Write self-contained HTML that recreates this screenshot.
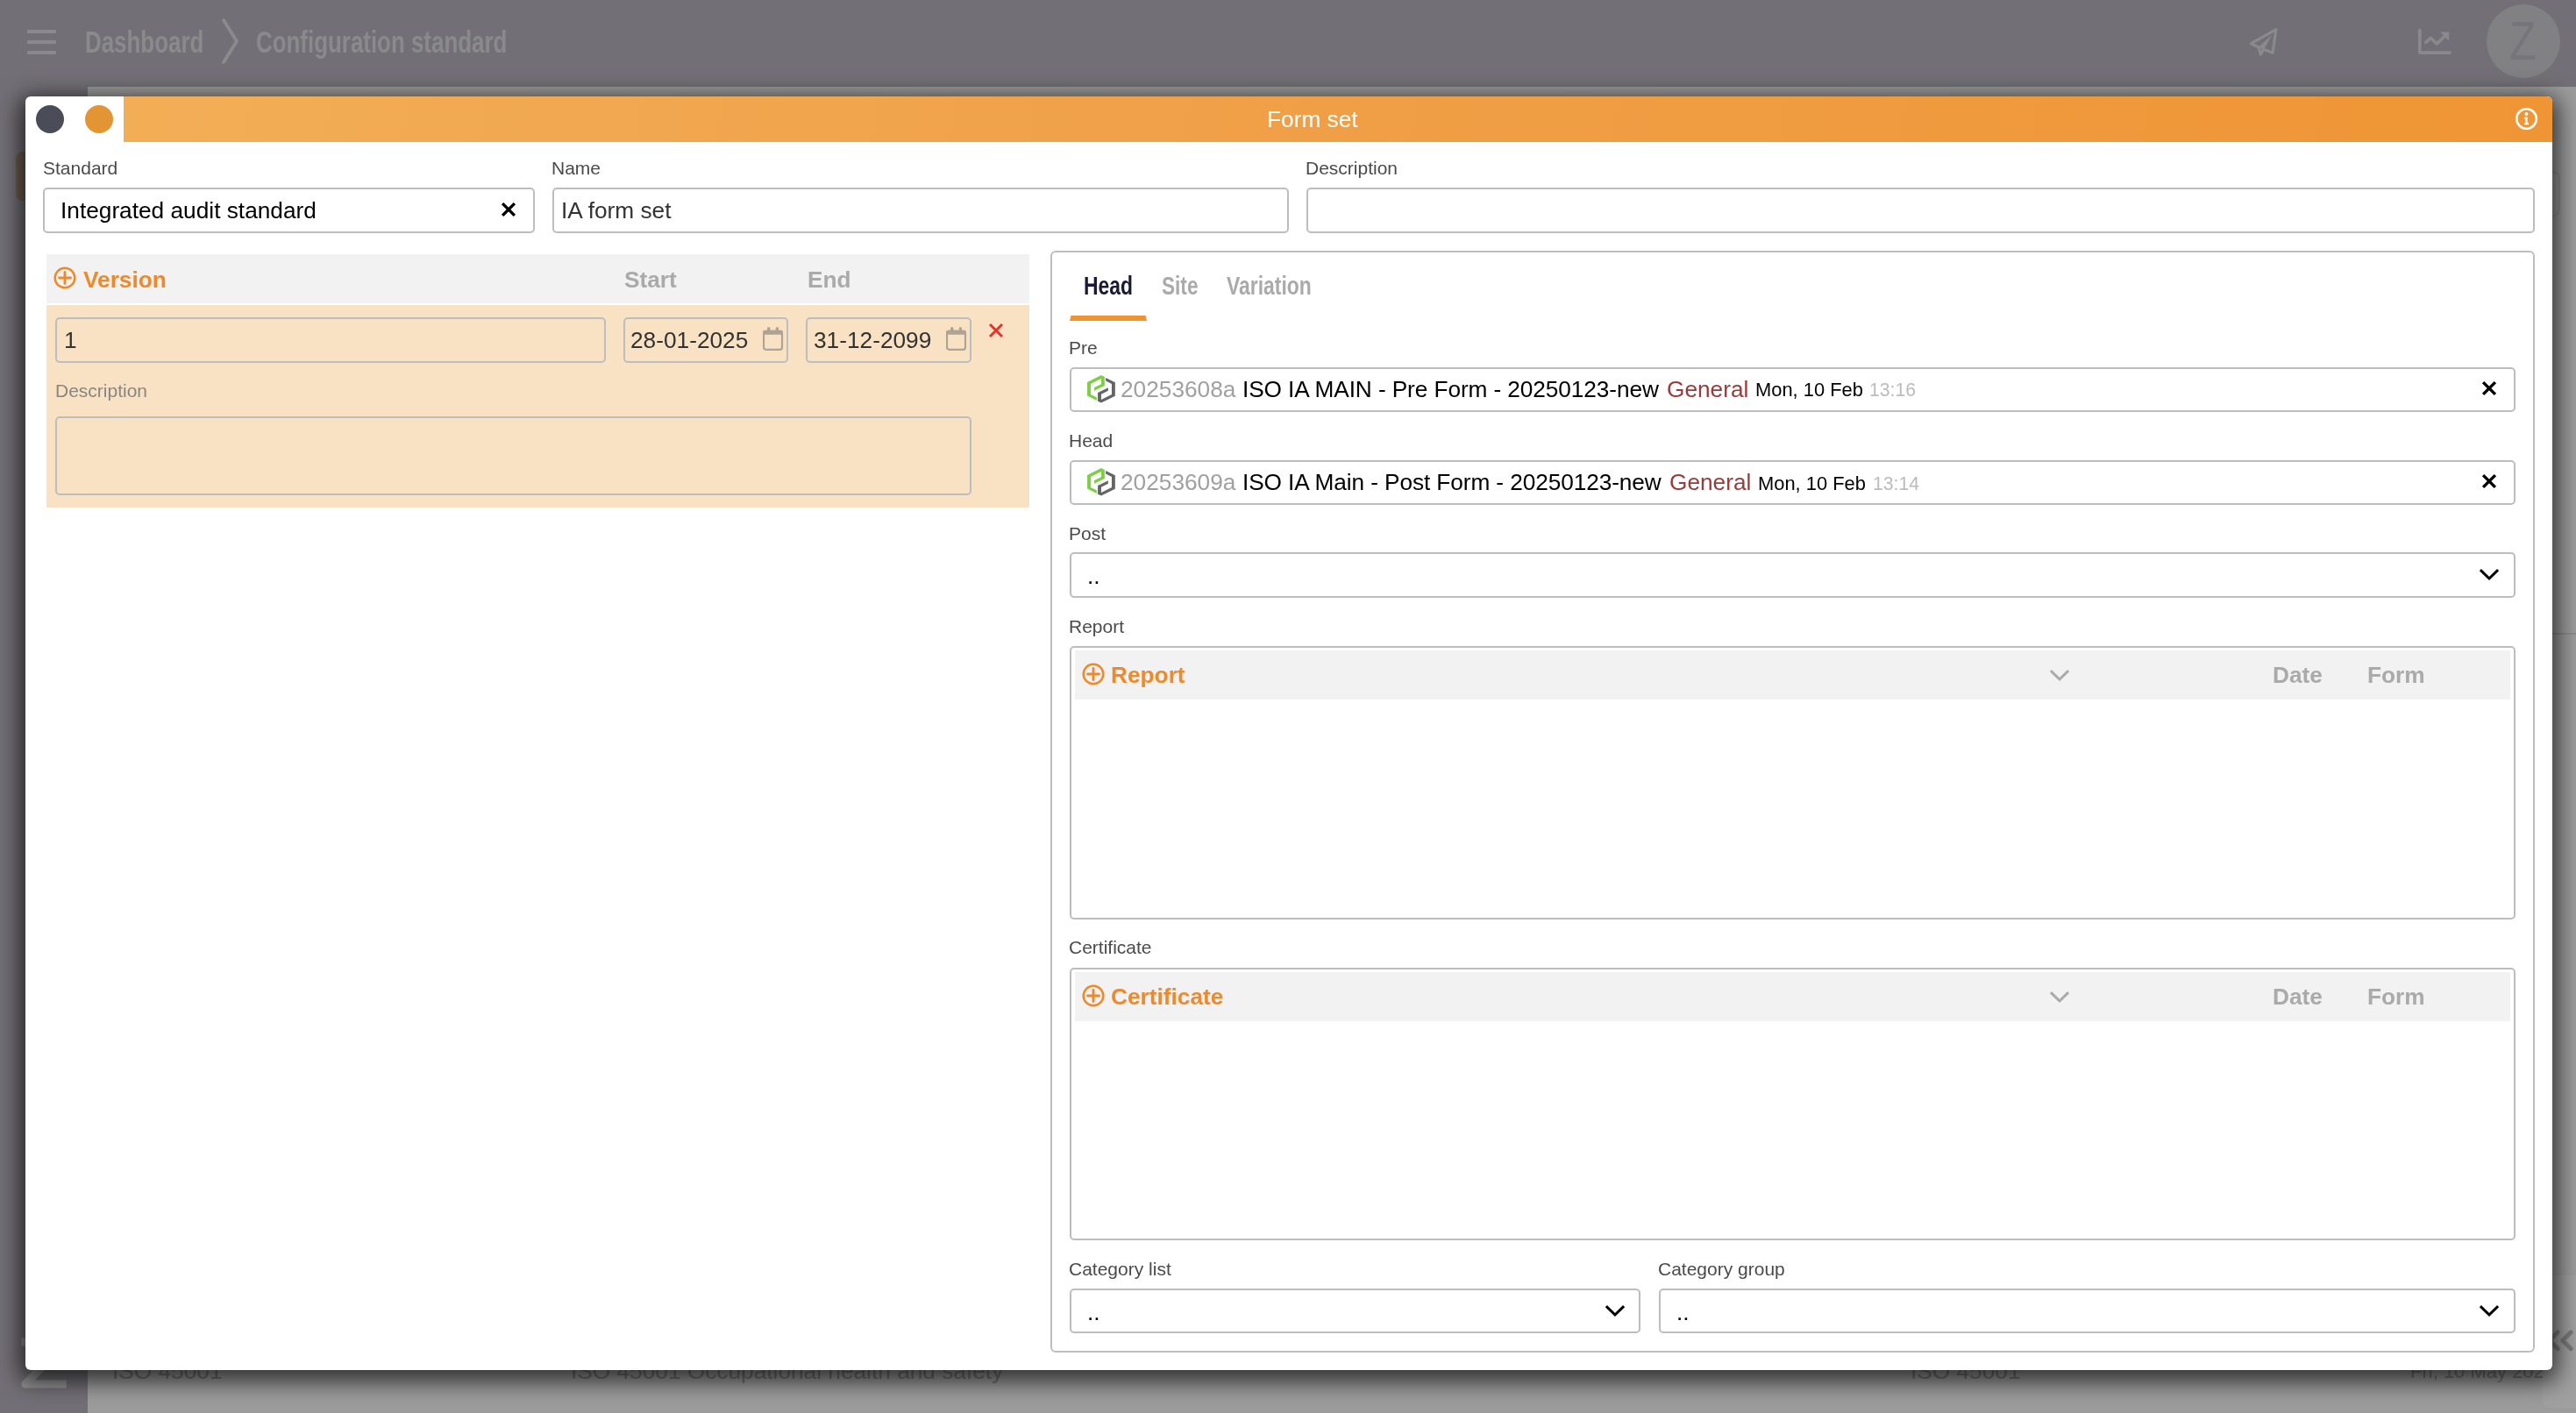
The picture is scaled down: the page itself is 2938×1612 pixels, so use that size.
<!DOCTYPE html>
<html><head><meta charset="utf-8"><style>
html,body{margin:0;padding:0}
body{width:2938px;height:1612px;position:relative;overflow:hidden;font-family:"Liberation Sans",sans-serif;background:#9c9c9c}
.t{position:absolute;white-space:nowrap;line-height:normal;will-change:transform}
.b{position:absolute;box-sizing:border-box}
</style></head><body>
<div class="b" style="left:0px;top:0px;width:2938px;height:97px;background:#727076"></div>
<div class="b" style="left:0px;top:97px;width:100px;height:1515px;background:#727076"></div>
<div class="b" style="left:100px;top:97px;width:2838px;height:1515px;background:#9c9c9c"></div>
<div class="b" style="left:100px;top:97px;width:2838px;height:2px;background:#727272"></div>
<div class="b" style="left:18px;top:173px;width:42px;height:56px;background:#6b5f4f;border-radius:8px"></div>
<div class="b" style="left:31px;top:34px;width:33px;height:4px;background:#8a898d;border-radius:1px"></div>
<div class="b" style="left:31px;top:46px;width:33px;height:4px;background:#8a898d;border-radius:1px"></div>
<div class="b" style="left:31px;top:58px;width:33px;height:4px;background:#8a898d;border-radius:1px"></div>
<div class="t" style="left:97.00px;top:28.12px;font-size:35px;color:#8a898d;font-weight:700;"><span style="display:inline-block;transform:scaleX(0.74);transform-origin:0 0">Dashboard</span></div>
<svg class="b" style="left:250px;top:20px" width="26" height="54" viewBox="0 0 26 54"><path d="M5 3 L20 27 L5 51" fill="none" stroke="#8a898d" stroke-width="4" stroke-linecap="round"/></svg>
<div class="t" style="left:292.00px;top:28.12px;font-size:35px;color:#8a898d;font-weight:700;"><span style="display:inline-block;transform:scaleX(0.74);transform-origin:0 0">Configuration standard</span></div>
<svg class="b" style="left:2560px;top:26px" width="44" height="44" viewBox="0 0 44 44"><path d="M7.5 23.7 L35.8 7.6 L32.1 34.3 L21.8 30.2 L18.2 36.2 L16.2 28 Z" fill="none" stroke="#8a898d" stroke-width="3.2" stroke-linejoin="round" stroke-linecap="round"/><polygon points="16.2,27.8 29.8,15.5 21.8,30.2" fill="#8a898d" stroke="#8a898d" stroke-width="1" stroke-linejoin="round"/></svg>
<svg class="b" style="left:2750px;top:28px" width="52" height="40" viewBox="0 0 52 40"><path d="M9.8 6.4 V32.1 H44.2" fill="none" stroke="#8a898d" stroke-width="3.6" stroke-linecap="round" stroke-linejoin="round"/><path d="M16.7 20.3 L22.3 15.3 L29.3 22 L37.4 13.9" fill="none" stroke="#8a898d" stroke-width="3.5" stroke-linecap="round" stroke-linejoin="round"/><path d="M34.5 9.2 L42.5 9.2 L42.5 17.2 Z" fill="#8a898d" stroke="#8a898d" stroke-width="1.5" stroke-linejoin="round"/></svg>
<div class="b" style="left:2836px;top:5px;width:84px;height:84px;border-radius:50%;background:#818183"></div>
<div class="t" style="left:2861.50px;top:10.42px;font-size:63.5px;color:#767579;font-weight:400;"><span style="display:inline-block;transform:scaleX(0.79);transform-origin:0 0">Z</span></div>
<div class="t" style="left:128.00px;top:1548.74px;font-size:26.25px;color:#727272;font-weight:400;">ISO 45001</div>
<div class="t" style="left:651.00px;top:1548.74px;font-size:26.25px;color:#727272;font-weight:400;">ISO 45001 Occupational health and safety</div>
<div class="t" style="left:2179.00px;top:1548.74px;font-size:26.25px;color:#727272;font-weight:400;">ISO 45001</div>
<div class="t" style="left:2749.00px;top:1551.88px;font-size:22px;color:#727272;font-weight:400;">Fri, 10 May 2024</div>
<div class="b" style="left:2850px;top:195px;width:70px;height:52px;border:2px solid rgba(0,0,0,0.08);border-radius:8px"></div>
<div class="b" style="left:2900px;top:722px;width:38px;height:2px;background:rgba(0,0,0,0.1)"></div>
<div class="b" style="left:2900px;top:1455px;width:60px;height:151px;background:#a0a0a0;border-radius:8px"></div>
<svg class="b" style="left:2900px;top:1510px" width="40" height="38" viewBox="0 0 40 38"><path d="M17.2 9.8 L7.8 19.3 L17.2 28.7 M32.2 9.8 L22.8 19.3 L32.2 28.7" fill="none" stroke="#7a7a7a" stroke-width="5" stroke-linecap="round" stroke-linejoin="round"/></svg>
<svg class="b" style="left:20px;top:1520px" width="62" height="70" viewBox="0 0 62 70"><path d="M4.5 11 H55.7 L9 59 H55.7" fill="none" stroke="#929295" stroke-width="9" stroke-linejoin="round"/></svg>
<div class="b" style="left:29px;top:110px;width:2882px;height:1453px;background:#fff;border-radius:6px;box-shadow:0 7px 27px 6px rgba(0,0,0,0.7)"></div>
<div class="b" style="left:141px;top:110px;width:2770px;height:52px;background:linear-gradient(100deg,#f2ae56 0%,#f0a048 45%,#ef9535 100%);border-top-right-radius:6px"></div>
<div class="t" style="left:1445.00px;top:121.24px;font-size:26.25px;color:#fff;font-weight:400;">Form set</div>
<div class="b" style="left:41px;top:120px;width:32px;height:32px;border-radius:50%;background:#4a4d57"></div>
<div class="b" style="left:97px;top:120px;width:32px;height:32px;border-radius:50%;background:#e29532"></div>
<svg class="b" style="left:2867px;top:121px" width="29" height="29" viewBox="0 0 29 29"><circle cx="14.5" cy="14.5" r="11.3" fill="none" stroke="#fff" stroke-width="2.6"/><circle cx="14.5" cy="9" r="1.9" fill="#fff"/><path d="M12 12.5 h3.6 v6.5 h1.4 v2.2 h-5 v-2.2 h1.4 v-4.3 h-1.4z" fill="#fff"/></svg>
<div class="t" style="left:49.00px;top:179.99px;font-size:21px;color:#4a4a4a;font-weight:400;">Standard</div>
<div class="t" style="left:629.00px;top:179.99px;font-size:21px;color:#4a4a4a;font-weight:400;">Name</div>
<div class="t" style="left:1489.00px;top:179.99px;font-size:21px;color:#4a4a4a;font-weight:400;">Description</div>
<div class="b" style="left:49px;top:214px;width:561px;height:52px;border:2px solid #bdbdbd;border-radius:5px;background:#fff"></div>
<div class="t" style="left:69.00px;top:225.24px;font-size:26.25px;color:#000;font-weight:400;">Integrated audit standard</div>
<svg class="b" style="left:570.3px;top:229.3px" width="20" height="20" viewBox="0 0 20 20"><path d="M3.0999999999999996 3.0999999999999996 L16.9 16.9 M16.9 3.0999999999999996 L3.0999999999999996 16.9" stroke="#000" stroke-width="3.4"/></svg>
<div class="b" style="left:630px;top:214px;width:840px;height:52px;border:2px solid #bdbdbd;border-radius:5px;background:#fff"></div>
<div class="t" style="left:639.50px;top:225.24px;font-size:26.25px;color:#333;font-weight:400;">IA form set</div>
<div class="b" style="left:1490px;top:214px;width:1401px;height:52px;border:2px solid #bdbdbd;border-radius:5px;background:#fff"></div>
<div class="b" style="left:53px;top:290px;width:1121px;height:56px;background:#f2f2f2"></div>
<div class="b" style="left:53px;top:348px;width:1121px;height:231px;background:#f9e2c4"></div>
<svg class="b" style="left:60.400000000000006px;top:303px" width="28" height="28" viewBox="0 0 28 28"><circle cx="14" cy="14" r="11.3" fill="none" stroke="#ee8a2b" stroke-width="2.5"/><path d="M7.5 14 H20.5 M14 7.5 V20.5" stroke="#ee8a2b" stroke-width="2.9" stroke-linecap="round"/></svg>
<div class="t" style="left:95.20px;top:303.54px;font-size:26.25px;color:#ee8a2b;font-weight:700;">Version</div>
<div class="t" style="left:712.00px;top:303.54px;font-size:26.25px;color:#aaaaaa;font-weight:700;">Start</div>
<div class="t" style="left:921.00px;top:303.54px;font-size:26.25px;color:#aaaaaa;font-weight:700;">End</div>
<div class="b" style="left:63px;top:362px;width:628px;height:52px;border:2px solid #bcbdc0;border-radius:5px;background:transparent"></div>
<div class="t" style="left:73.00px;top:372.74px;font-size:26.25px;color:#333;font-weight:400;">1</div>
<div class="b" style="left:711px;top:362px;width:188px;height:52px;border:2px solid #bcbdc0;border-radius:5px;background:transparent"></div>
<div class="t" style="left:719.00px;top:372.74px;font-size:26.25px;color:#333;font-weight:400;">28-01-2025</div>
<svg class="b" style="left:870px;top:373px" width="24" height="27" viewBox="0 0 24 27"><rect x="1" y="4.8" width="21" height="21" rx="2.5" fill="none" stroke="#aea394" stroke-width="2.2"/><rect x="0" y="3.7" width="23" height="5" rx="2" fill="#aea394"/><rect x="5" y="0" width="3.4" height="5" rx="1.5" fill="#aea394"/><rect x="14.8" y="0" width="3.2" height="5" rx="1.5" fill="#aea394"/></svg>
<div class="b" style="left:919px;top:362px;width:189px;height:52px;border:2px solid #bcbdc0;border-radius:5px;background:transparent"></div>
<div class="t" style="left:928.00px;top:372.74px;font-size:26.25px;color:#333;font-weight:400;">31-12-2099</div>
<svg class="b" style="left:1079px;top:373px" width="24" height="27" viewBox="0 0 24 27"><rect x="1" y="4.8" width="21" height="21" rx="2.5" fill="none" stroke="#aea394" stroke-width="2.2"/><rect x="0" y="3.7" width="23" height="5" rx="2" fill="#aea394"/><rect x="5" y="0" width="3.4" height="5" rx="1.5" fill="#aea394"/><rect x="14.8" y="0" width="3.2" height="5" rx="1.5" fill="#aea394"/></svg>
<svg class="b" style="left:1126px;top:367px" width="20" height="20" viewBox="0 0 20 20"><path d="M3 3 L17 17 M17 3 L3 17" stroke="#e8322a" stroke-width="3"/></svg>
<div class="t" style="left:63.00px;top:434.49px;font-size:21px;color:#8a8580;font-weight:400;">Description</div>
<div class="b" style="left:63px;top:475px;width:1045px;height:90px;border:2px solid #bcbdc0;border-radius:5px;background:transparent"></div>
<div class="b" style="left:1198px;top:286px;width:1693px;height:1257px;border:2px solid #bdbdbd;border-radius:6px"></div>
<div class="t" style="left:1235.50px;top:309.07px;font-size:29.75px;color:#1b1a35;font-weight:700;"><span style="display:inline-block;transform:scaleX(0.77);transform-origin:0 0">Head</span></div>
<div class="t" style="left:1324.50px;top:309.07px;font-size:29.75px;color:#aaaaaa;font-weight:700;"><span style="display:inline-block;transform:scaleX(0.76);transform-origin:0 0">Site</span></div>
<div class="t" style="left:1398.50px;top:309.07px;font-size:29.75px;color:#aaaaaa;font-weight:700;"><span style="display:inline-block;transform:scaleX(0.77);transform-origin:0 0">Variation</span></div>
<svg class="b" style="left:1220px;top:360px" width="88" height="6" viewBox="0 0 88 6"><polygon points="1.5,0 86.5,0 88,6 0,6" fill="#f0922f"/></svg>
<div class="t" style="left:1219.00px;top:384.99px;font-size:21px;color:#4a4a4a;font-weight:400;">Pre</div>
<div class="b" style="left:1220px;top:418.5px;width:1649px;height:51.0px;border:2px solid #bdbdbd;border-radius:5px;background:#fff"></div>
<svg class="b" style="left:1234px;top:421.5px" width="44" height="44" viewBox="0 0 44 44"><polygon points="6.07,14.0 21.96,6.07 25.86,7.94 25.86,18.07 14.02,23.68 14.02,19.94 21.96,16.2 21.96,9.97 9.97,15.89 9.97,27.88 16.82,31.15 16.82,34.89 6.07,29.6" fill="#7dcf45"/><polygon points="27.1,8.88 37.85,14.17 37.85,29.75 21.96,37.54 18.07,35.67 18.07,26.01 29.9,20.25 29.9,23.83 21.96,27.73 21.96,33.96 33.96,28.04 33.96,15.89 27.1,12.46" fill="#656565"/></svg>
<div class="t" style="left:1278.00px;top:428.54px;font-size:26.25px;color:#a0a0a0;font-weight:400;">20253608a</div>
<div class="t" style="left:1417.00px;top:428.54px;font-size:26.25px;color:#000;font-weight:400;letter-spacing:-0.1px">ISO IA MAIN - Pre Form - 20250123-new</div>
<div class="t" style="left:1901.00px;top:428.54px;font-size:26.25px;color:#9b3a3a;font-weight:400;">General</div>
<div class="t" style="left:2001.50px;top:432.47px;font-size:21.9px;color:#000;font-weight:400;">Mon, 10 Feb</div>
<div class="t" style="left:2132.00px;top:433.11px;font-size:21.2px;color:#bbbbbb;font-weight:400;">13:16</div>
<svg class="b" style="left:2829.3px;top:432.8px" width="20" height="20" viewBox="0 0 20 20"><path d="M3.0999999999999996 3.0999999999999996 L16.9 16.9 M16.9 3.0999999999999996 L3.0999999999999996 16.9" stroke="#000" stroke-width="3.4"/></svg>
<div class="t" style="left:1219.00px;top:490.99px;font-size:21px;color:#4a4a4a;font-weight:400;">Head</div>
<div class="b" style="left:1220px;top:525px;width:1649px;height:51px;border:2px solid #bdbdbd;border-radius:5px;background:#fff"></div>
<svg class="b" style="left:1234px;top:528px" width="44" height="44" viewBox="0 0 44 44"><polygon points="6.07,14.0 21.96,6.07 25.86,7.94 25.86,18.07 14.02,23.68 14.02,19.94 21.96,16.2 21.96,9.97 9.97,15.89 9.97,27.88 16.82,31.15 16.82,34.89 6.07,29.6" fill="#7dcf45"/><polygon points="27.1,8.88 37.85,14.17 37.85,29.75 21.96,37.54 18.07,35.67 18.07,26.01 29.9,20.25 29.9,23.83 21.96,27.73 21.96,33.96 33.96,28.04 33.96,15.89 27.1,12.46" fill="#656565"/></svg>
<div class="t" style="left:1278.00px;top:535.04px;font-size:26.25px;color:#a0a0a0;font-weight:400;">20253609a</div>
<div class="t" style="left:1417.00px;top:535.04px;font-size:26.25px;color:#000;font-weight:400;letter-spacing:-0.1px">ISO IA Main - Post Form - 20250123-new</div>
<div class="t" style="left:1903.50px;top:535.04px;font-size:26.25px;color:#9b3a3a;font-weight:400;">General</div>
<div class="t" style="left:2004.50px;top:538.97px;font-size:21.9px;color:#000;font-weight:400;">Mon, 10 Feb</div>
<div class="t" style="left:2135.50px;top:539.61px;font-size:21.2px;color:#bbbbbb;font-weight:400;">13:14</div>
<svg class="b" style="left:2829.3px;top:539.3px" width="20" height="20" viewBox="0 0 20 20"><path d="M3.0999999999999996 3.0999999999999996 L16.9 16.9 M16.9 3.0999999999999996 L3.0999999999999996 16.9" stroke="#000" stroke-width="3.4"/></svg>
<div class="t" style="left:1219.00px;top:596.99px;font-size:21px;color:#4a4a4a;font-weight:400;">Post</div>
<div class="b" style="left:1220px;top:630px;width:1649px;height:52px;border:2px solid #bdbdbd;border-radius:5px;background:#fff"></div>
<div class="t" style="left:1240.00px;top:642.24px;font-size:26.25px;color:#000;font-weight:400;">..</div>
<svg class="b" style="left:2823.2px;top:644.4px" width="32" height="24" viewBox="0 0 32 24"><path d="M5.9 6.1 L16 16 L26.1 6.1" fill="none" stroke="#000" stroke-width="3"/></svg>
<div class="t" style="left:1219.00px;top:702.99px;font-size:21px;color:#4a4a4a;font-weight:400;">Report</div>
<div class="b" style="left:1220px;top:737px;width:1649px;height:312px;border:2px solid #bdbdbd;border-radius:5px;background:#fff"></div>
<div class="b" style="left:1226px;top:742px;width:1637px;height:56px;background:#f2f2f2"></div>
<svg class="b" style="left:1232.5px;top:755px" width="28" height="28" viewBox="0 0 28 28"><circle cx="14" cy="14" r="11.3" fill="none" stroke="#ee8a2b" stroke-width="2.5"/><path d="M7.5 14 H20.5 M14 7.5 V20.5" stroke="#ee8a2b" stroke-width="2.9" stroke-linecap="round"/></svg>
<div class="t" style="left:1267.00px;top:754.94px;font-size:26.25px;color:#ee8a2b;font-weight:700;">Report</div>
<svg class="b" style="left:2333.2px;top:758.7px" width="32" height="24" viewBox="0 0 32 24"><path d="M5.9 6.1 L16 16 L26.1 6.1" fill="none" stroke="#aaaaaa" stroke-width="3"/></svg>
<div class="t" style="left:2592.00px;top:755.24px;font-size:26.25px;color:#aaaaaa;font-weight:700;">Date</div>
<div class="t" style="left:2700.00px;top:755.24px;font-size:26.25px;color:#aaaaaa;font-weight:700;">Form</div>
<div class="t" style="left:1219.00px;top:1068.99px;font-size:21px;color:#4a4a4a;font-weight:400;">Certificate</div>
<div class="b" style="left:1220px;top:1104px;width:1649px;height:311px;border:2px solid #bdbdbd;border-radius:5px;background:#fff"></div>
<div class="b" style="left:1226px;top:1109px;width:1637px;height:56px;background:#f2f2f2"></div>
<svg class="b" style="left:1232.5px;top:1122px" width="28" height="28" viewBox="0 0 28 28"><circle cx="14" cy="14" r="11.3" fill="none" stroke="#ee8a2b" stroke-width="2.5"/><path d="M7.5 14 H20.5 M14 7.5 V20.5" stroke="#ee8a2b" stroke-width="2.9" stroke-linecap="round"/></svg>
<div class="t" style="left:1267.00px;top:1121.94px;font-size:26.25px;color:#ee8a2b;font-weight:700;">Certificate</div>
<svg class="b" style="left:2333.2px;top:1125.7px" width="32" height="24" viewBox="0 0 32 24"><path d="M5.9 6.1 L16 16 L26.1 6.1" fill="none" stroke="#aaaaaa" stroke-width="3"/></svg>
<div class="t" style="left:2592.00px;top:1122.24px;font-size:26.25px;color:#aaaaaa;font-weight:700;">Date</div>
<div class="t" style="left:2700.00px;top:1122.24px;font-size:26.25px;color:#aaaaaa;font-weight:700;">Form</div>
<div class="t" style="left:1219.00px;top:1436.49px;font-size:21px;color:#4a4a4a;font-weight:400;">Category list</div>
<div class="b" style="left:1220px;top:1470px;width:651px;height:51px;border:2px solid #bdbdbd;border-radius:5px;background:#fff"></div>
<div class="t" style="left:1240.00px;top:1482.24px;font-size:26.25px;color:#000;font-weight:400;">..</div>
<svg class="b" style="left:1825.5px;top:1484px" width="32" height="24" viewBox="0 0 32 24"><path d="M5.9 6.1 L16 16 L26.1 6.1" fill="none" stroke="#000" stroke-width="3"/></svg>
<div class="t" style="left:1891.00px;top:1436.49px;font-size:21px;color:#4a4a4a;font-weight:400;">Category group</div>
<div class="b" style="left:1892px;top:1470px;width:977px;height:51px;border:2px solid #bdbdbd;border-radius:5px;background:#fff"></div>
<div class="t" style="left:1912.00px;top:1482.24px;font-size:26.25px;color:#000;font-weight:400;">..</div>
<svg class="b" style="left:2823.2px;top:1484px" width="32" height="24" viewBox="0 0 32 24"><path d="M5.9 6.1 L16 16 L26.1 6.1" fill="none" stroke="#000" stroke-width="3"/></svg>
</body></html>
